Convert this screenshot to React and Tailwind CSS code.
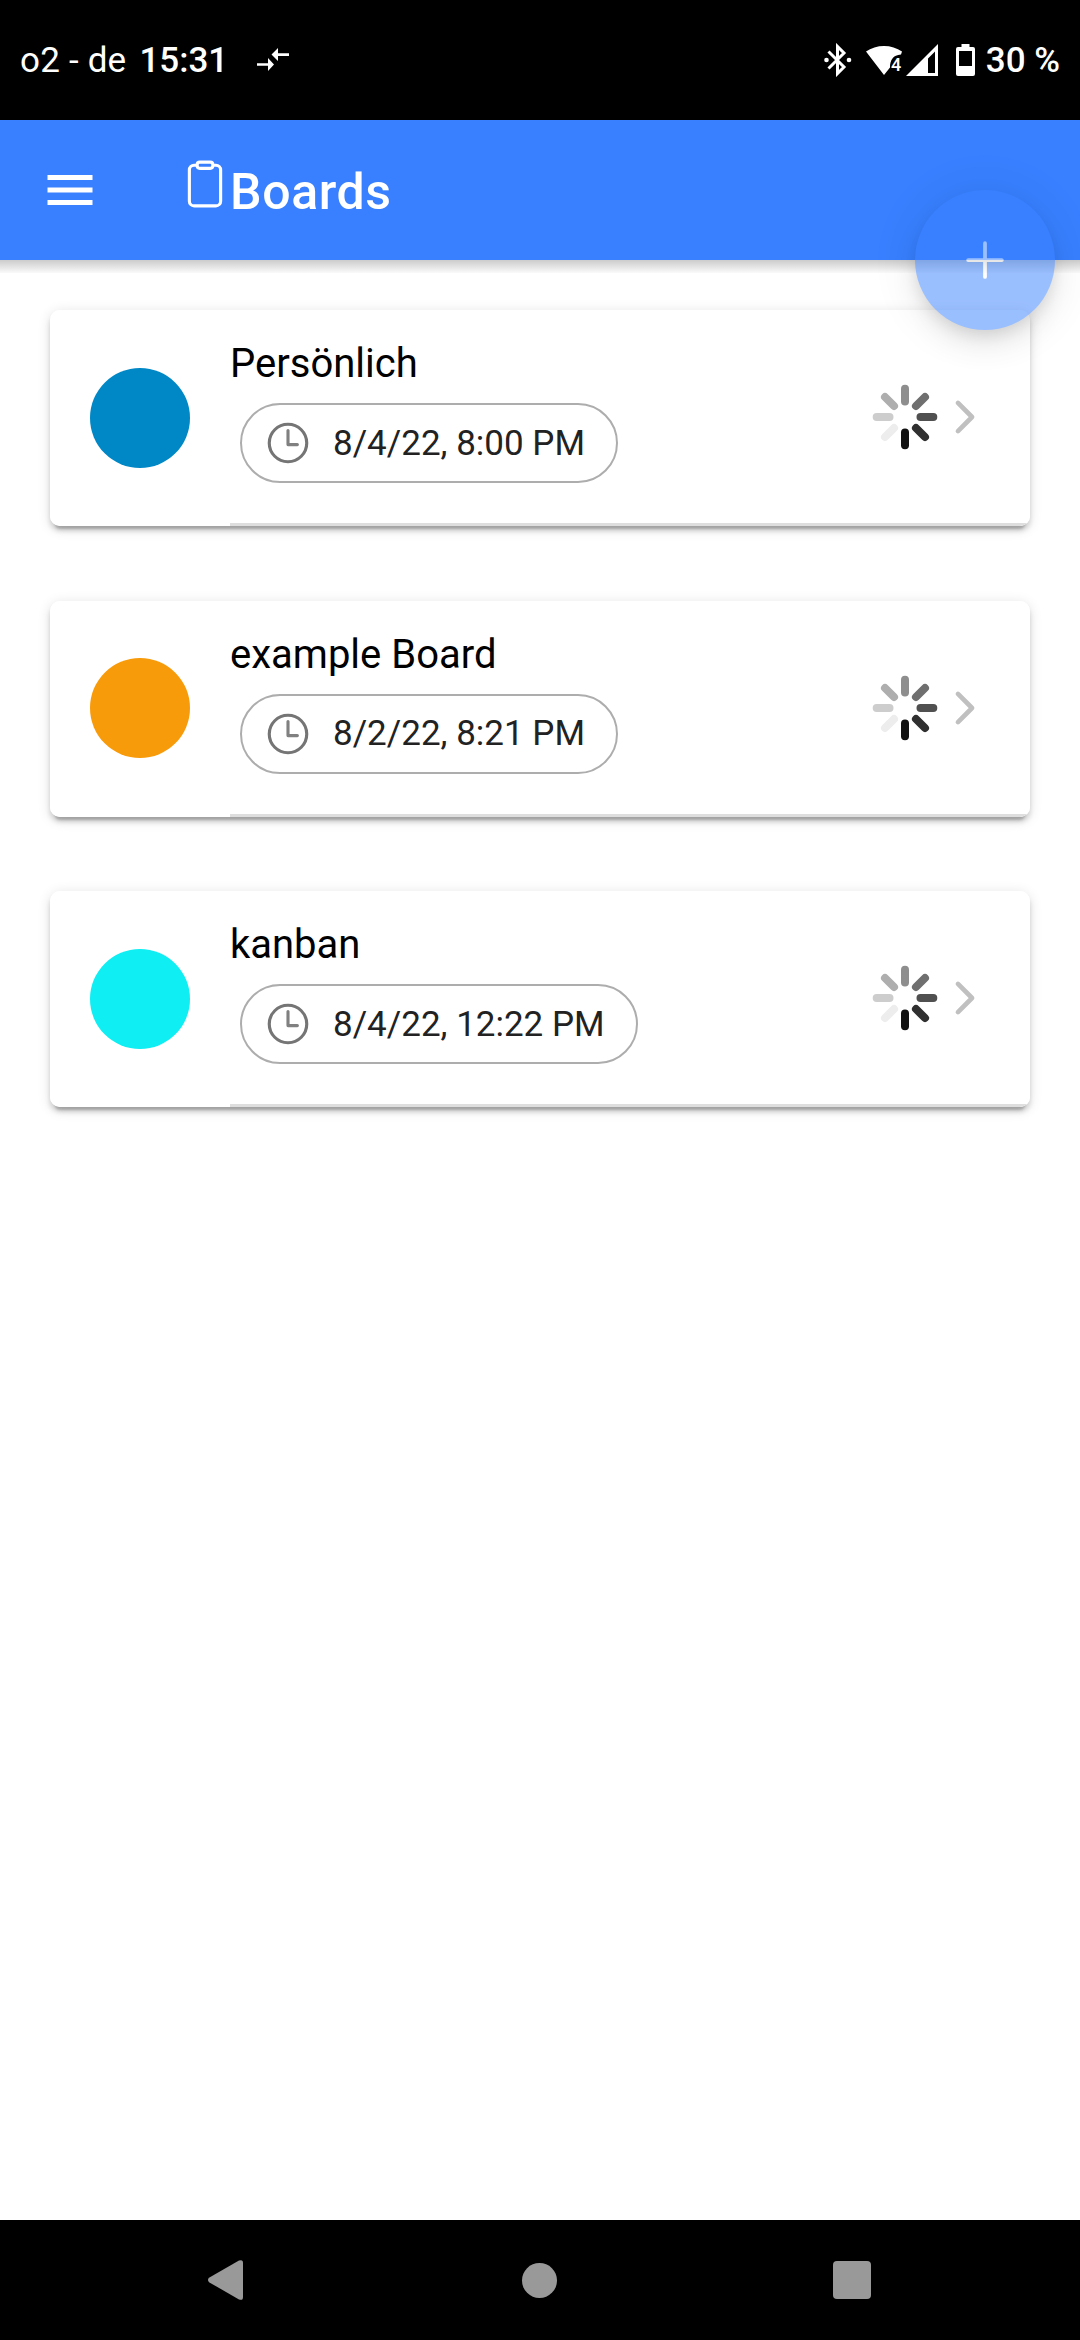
import React from "react";

const boards = [
  { title: "Persönlich", date: "8/4/22, 8:00 PM", dot: "bg-[#0087c5]" },
  { title: "example Board", date: "8/2/22, 8:21 PM", dot: "bg-[#f89b0a]" },
  { title: "kanban", date: "8/4/22, 12:22 PM", dot: "bg-[#0eeef3]" },
];

const spokes = ["#8e8e8e", "#6f6f6f", "#505050", "#303030", "#111111", "#ededed", "#cdcdcd", "#aeaeae"];

function Spinner() {
  return (
    <svg className="h-[70px] w-[70px]" viewBox="-35 -35 70 70">
      {spokes.map((color, i) => (
        <line key={color} x1="0" y1="-15.5" x2="0" y2="-28.3" stroke={color} strokeWidth="8" strokeLinecap="round" transform={`rotate(${i * 45})`} />
      ))}
    </svg>
  );
}

function StatusBar() {
  return (
    <div className="flex h-[120px] items-center bg-black pr-5 pl-5 text-[35px] leading-[44px] text-white">
      <span className="pt-[2px] tracking-[0.2px]">o2 - de</span>
      <span className="ml-[13px] pt-[2px] font-medium">15:31</span>
      <svg className="ml-[29px] h-6 w-8" viewBox="0 0 32 24" fill="#fff">
        <path d="M0 15.200h11V10l6 6.500-6 6.500v-5.200H0zM32 5.200H21V0l-6.500 6.500L21 13V8h11z" />
      </svg>
      <div className="ml-auto flex items-center">
        <svg className="h-[34px] w-7" viewBox="0 0 28 34" fill="none" stroke="#fff" strokeWidth="3">
          <path d="M4.500 8.500 20 24l-6.500 6.500v-27L20 10 4.500 25.500" />
          <circle cx="2.500" cy="17" r="2.300" fill="#fff" stroke="none" />
          <circle cx="25" cy="17" r="2.300" fill="#fff" stroke="none" />
        </svg>
        <svg className="ml-[14px] h-8 w-9" viewBox="0 0 36 32">
          <path d="M0 7.500C10 0 26 0 36 7.500L35 10.500C27 11 24 16 24 23.500L18 31Z" fill="#fff" />
          <text x="25" y="27" fill="#fff" fontSize="18" fontWeight="500" fontFamily="Roboto, sans-serif">4</text>
        </svg>
        <svg className="ml-1 h-8 w-8" viewBox="0 0 32 32" fill="#fff" fillRule="evenodd">
          <path d="M32 0v32H0zM29 7.500 22 14.500V29h7z" />
        </svg>
        <svg className="ml-[18px] h-8 w-[19px]" viewBox="0 0 19 32" fill="#fff" fillRule="evenodd">
          <path d="M5.500 0h8v3H17a2 2 0 0 1 2 2v25a2 2 0 0 1-2 2H2a2 2 0 0 1-2-2V5a2 2 0 0 1 2-2h3.500zM3 7v15h13V7z" />
        </svg>
        <span className="ml-[11px] pt-[2px] font-medium">30 %</span>
      </div>
    </div>
  );
}

function Header() {
  return (
    <header className="relative flex h-[140px] bg-[#3880ff] pl-10 text-white">
      <svg className="mt-10 h-[60px] w-[60px]" viewBox="0 0 512 512" fill="currentColor">
        <path d="M64 384h384v-42.670H64zm0-106.670h384v-42.660H64zM64 128v42.670h384V128z" />
      </svg>
      <svg className="mt-[39px] ml-20 h-[50px] w-[50px]" viewBox="0 0 512 512" fill="none" stroke="currentColor" strokeWidth="32" strokeLinejoin="round">
        <path d="M336 64h32a48 48 0 0 1 48 48v320a48 48 0 0 1-48 48H144a48 48 0 0 1-48-48V112a48 48 0 0 1 48-48h32" />
        <rect x="176" y="32" width="160" height="64" rx="26" />
      </svg>
      <h1 className="mt-[42px] text-[50px] leading-[60px] font-medium tracking-[0.6px]">Boards</h1>
      <div className="absolute top-full left-0 h-[13px] w-full bg-linear-to-b from-black/20 to-black/2" />
      <button className="absolute top-[70px] right-[25px] z-10 flex h-[140px] w-[140px] items-center justify-center rounded-full bg-[#3880ff] opacity-50 shadow-[0_7.5px_12.5px_-2.5px_rgba(0,0,0,0.2),0_15px_25px_0_rgba(0,0,0,0.14),0_2.5px_45px_0_rgba(0,0,0,0.12)]">
        <svg className="h-[60px] w-[60px]" viewBox="0 0 512 512" fill="none" stroke="currentColor" strokeWidth="32" strokeLinecap="round">
          <path d="M256 112v288M400 256H112" />
        </svg>
      </button>
    </header>
  );
}

function BoardCard({ board }) {
  return (
    <div className="rounded-[10px] shadow-[0_7.5px_2.5px_-5px_rgba(0,0,0,0.2),0_5px_5px_0_rgba(0,0,0,0.14),0_2.5px_12.5px_0_rgba(0,0,0,0.12)]">
      <div className="flex h-[216px] overflow-hidden rounded-[10px] bg-white pl-10">
        <div className={`mt-[57.5px] h-[100px] w-[100px] rounded-full ${board.dot}`} />
        <div className="ml-10 flex flex-1 border-b-[3px] border-[#dedede] pr-10">
          <div className="flex flex-1 flex-col items-start pt-[30px]">
            <h2 className="text-[40px] leading-[48px] text-black">{board.title}</h2>
            <div className="mt-[15px] ml-[10px] flex h-20 items-center rounded-full border-2 border-[#adadad] pr-[31px] pl-[21px] text-[35px] text-[#222]">
              <svg className="h-[50px] w-[50px]" viewBox="0 0 512 512" fill="none" stroke="#757575" strokeWidth="32" strokeLinecap="round" strokeLinejoin="round">
                <circle cx="256" cy="256" r="192" />
                <path d="M256 128v144h96" stroke="#808080" />
              </svg>
              <span className="ml-5 pt-[2px]">{board.date}</span>
            </div>
          </div>
          <div className="flex h-[214px] items-center">
            <Spinner />
            <svg className="h-[50px] w-[50px]" viewBox="0 0 512 512" fill="none" stroke="#c0c0c0" strokeWidth="48" strokeLinecap="round" strokeLinejoin="round">
              <path d="M184 112l144 144-144 144" />
            </svg>
          </div>
        </div>
      </div>
    </div>
  );
}

function NavBar() {
  return (
    <nav className="flex h-[120px] items-center justify-between bg-black pr-[209px] pl-[208px]">
      <svg className="h-10 w-[35px]" viewBox="0 0 35 40" fill="#999">
        <path d="M1 17.800 31 .6Q35-1 35 3v34q0 4-4 2.400L1 22.200Q-1 20 1 17.800z" />
      </svg>
      <div className="ml-[3px] h-[35px] w-[35px] rounded-full bg-[#999]" />
      <div className="h-[38px] w-[38px] rounded-[4px] bg-[#999]" />
    </nav>
  );
}

export default function App() {
  return (
    <div className="flex h-[2340px] w-[1080px] flex-col bg-white font-[Roboto,sans-serif]">
      <StatusBar />
      <Header />
      <main className="flex flex-1 flex-col gap-[74.5px] px-[50px] pt-[50px]">
        {boards.map((board) => (
          <BoardCard key={board.title} board={board} />
        ))}
      </main>
      <NavBar />
    </div>
  );
}
